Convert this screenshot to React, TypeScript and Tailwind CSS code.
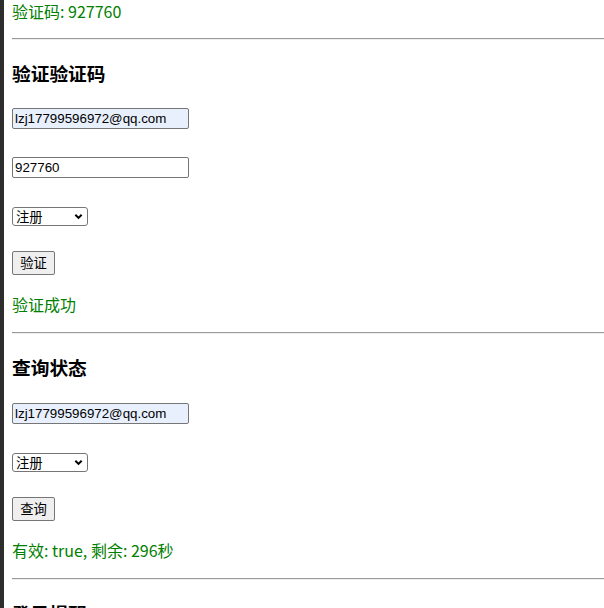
import React from "react";

const cjk = "font-['Noto_Sans_CJK_SC',sans-serif]";

function Rule() {
  return <hr className="h-0 border-0 border-t border-t-[#9a9a9a] border-b border-b-[#eeeeee]" />;
}

function TextInput({ value, filled }: { value: string; filled?: boolean }) {
  return (
    <input
      readOnly
      value={value}
      className={`block w-[177px] h-[21px] px-[2px] border border-[#767676] rounded-[2px] text-[13.33px] text-black font-['Liberation_Sans',Arial,sans-serif] outline-none ${
        filled ? "bg-[#e8f0fe]" : "bg-white"
      }`}
    />
  );
}

function TypeSelect({ className }: { className: string }) {
  return (
    <div className={`relative w-[76px] h-[19px] ${className}`}>
      <select className="appearance-none block w-full h-full pl-[3px] border border-[#767676] rounded-[3px] bg-white text-[13.33px] leading-[17px] text-black">
        <option>注册</option>
        <option>登录</option>
      </select>
      {/* native-looking chevron */}
      <svg
        viewBox="0 0 10 10"
        className="pointer-events-none absolute right-[5px] top-[5px] w-[9px] h-[9px]"
      >
        <path d="M1.5 3 L5 6.5 L8.5 3" fill="none" stroke="#000" strokeWidth="2.2" />
      </svg>
    </div>
  );
}

function Btn({ label, className }: { label: string; className: string }) {
  return (
    <button className={`block w-[43px] h-[24px] border border-[#767676] rounded-[2px] bg-[#efefef] text-[13.33px] text-black ${className}`}>
      {label}
    </button>
  );
}

export default function App() {
  return (
    <div className={`flex min-h-screen bg-white ${cjk}`}>
      <div className="w-[4px] shrink-0 bg-[#2d2d2d]" />
      <div className="flex-1 pl-2 text-[16px] text-black">
        <div className="h-[23px] leading-[23px] text-[#008000]">验证码: 927760</div>
        <div className="mt-[15px]">
          <Rule />
        </div>

        {/* verify */}
        <h3 className="mt-[19px] h-[27px] leading-[27px] text-[18.72px] font-bold">验证验证码</h3>
        <div className="mt-[22px]">
          <TextInput value="lzj17799596972@qq.com" filled />
        </div>
        <div className="mt-[28px]">
          <TextInput value="927760" />
        </div>
        <TypeSelect className="mt-[29px]" />
        <Btn label="验证" className="mt-[25px]" />
        <div className="mt-[18px] h-[23px] leading-[23px] text-[#008000]">验证成功</div>
        <div className="mt-[16px]">
          <Rule />
        </div>

        {/* status */}
        <h3 className="mt-[19px] h-[27px] leading-[27px] text-[18.72px] font-bold">查询状态</h3>
        <div className="mt-[23px]">
          <TextInput value="lzj17799596972@qq.com" filled />
        </div>
        <TypeSelect className="mt-[29px]" />
        <Btn label="查询" className="mt-[25px]" />
        <div className="mt-[18px] h-[23px] leading-[23px] text-[#008000]">有效: true, 剩余: 296秒</div>
        <div className="mt-[16px]">
          <Rule />
        </div>

        <h3 className="mt-[19px] h-[27px] leading-[27px] text-[18.72px] font-bold">登录提醒</h3>
        <div className="h-[200px]" />
      </div>
    </div>
  );
}
